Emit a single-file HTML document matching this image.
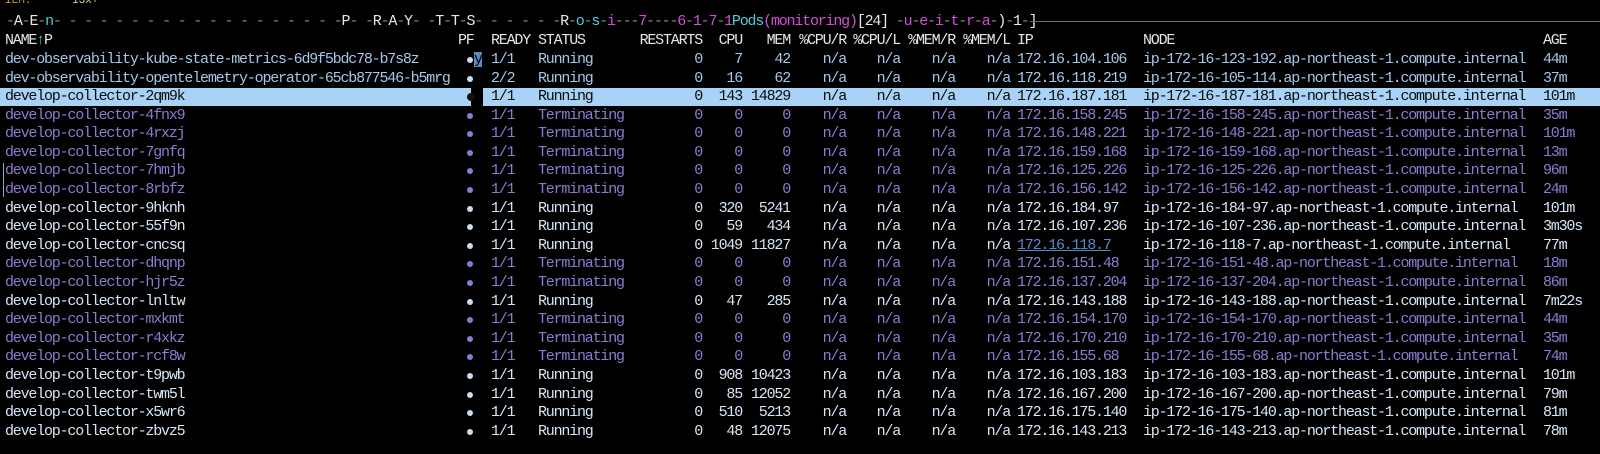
<!DOCTYPE html>
<html><head><meta charset="utf-8"><style>
html,body{margin:0;padding:0;background:#000;width:1600px;height:454px;overflow:hidden}
body{position:relative;font-family:"Liberation Mono",monospace;font-size:15px;letter-spacing:-1.2px;color:#d6e5f5}
.r{position:absolute;left:0;width:1600px;height:19px;line-height:19px;white-space:pre}
.r span{position:absolute;top:0}
.n{left:5px}.rd{left:491px}.st{left:538px}
.rs{right:898px}.cpu{right:858px}.mem{right:810px}.c1{right:754px}.c2{right:700px}.m1{right:645px}.m2{right:590px}
.ip{left:1017px}.nd{left:1143px}.ag{left:1543px}
.dot{left:467px;top:7px!important;width:6px;height:6px;border-radius:50%;background:#c9dcf2}
.t{color:#8c7bd0}.t .dot{background:#8c7bd0}
.b{color:#a7c6e8}
.h{color:#e6e6e6}
.sel{color:#0a0a0a}
.sel .dot{background:#111;width:8px;height:8px;top:6px!important}
.g{color:#8a8a8a}.w{color:#e8e8e8}.cy{color:#4fd0d8}.mg{color:#d24fd8}
i{font-style:normal}
</style></head><body>
<div style="position:absolute;left:5px;top:-6px;font-size:11px;letter-spacing:0;color:#c9a24a;line-height:14px">IEM.</div>
<div style="position:absolute;left:72px;top:-6px;font-size:11px;letter-spacing:0;color:#d8d8a0;line-height:14px">13x+</div>
<div class="r" style="top:12px"><span style="left:6px" class="g">-<i class="w">A</i>-<i class="w">E</i>-<i class="cy">n</i>- - - - - - - - - - - - - - - - - - -<i class="w">P</i>- -<i class="w">R</i>-<i class="w">A</i>-<i class="w">Y</i>- -<i class="w">T</i>-<i class="w">T</i>-<i class="w">S</i>- - - - - -<i class="w">R</i>-<i class="cy">o</i>-<i class="cy">s</i>-<i class="mg">i</i>---<i class="mg">7</i>----<i class="mg">6</i>-<i class="mg">1</i>-<i class="mg">7</i>-<i class="mg">1</i><i class="cy">Pods</i><i class="mg">(monitoring)</i><i class="w">[24]</i> -<i class="mg">u</i>-<i class="mg">e</i>-<i class="mg">i</i>-<i class="mg">t</i>-<i class="mg">r</i>-<i class="mg">a</i>-<i class="w">)</i>-<i class="w">1</i>-<i class="w">]</i></span></div>
<div style="position:absolute;left:1030px;top:21px;width:570px;height:1px;background:#6a6a6a"></div>

<div class="r h" style="top:31px"><span class="n">NAME<i style="color:#3cc9b0">↑</i>P</span><span style="left:458px">PF</span><span class="rd">READY</span><span class="st">STATUS</span><span class="rs">RESTARTS</span><span class="cpu">CPU</span><span class="mem">MEM</span><span class="c1">%CPU/R</span><span class="c2">%CPU/L</span><span class="m1">%MEM/R</span><span class="m2">%MEM/L</span><span class="ip">IP</span><span class="nd">NODE</span><span class="ag">AGE</span></div>

<div class="r b" style="top:50px"><span class="n">dev-observability-kube-state-metrics-6d9f5bdc78-b7s8z</span><span class="dot"></span><span style="left:474px;top:2px;width:8px;height:15px;background:#5a8ac0;color:#000;line-height:15px">y</span><span class="rd">1/1</span><span class="st">Running</span><span class="rs">0</span><span class="cpu">7</span><span class="mem">42</span><span class="c1">n/a</span><span class="c2">n/a</span><span class="m1">n/a</span><span class="m2">n/a</span><span class="ip">172.16.104.106</span><span class="nd">ip-172-16-123-192.ap-northeast-1.compute.internal</span><span class="ag">44m</span></div>
<div class="r b" style="top:69px"><span class="n">dev-observability-opentelemetry-operator-65cb877546-b5mrg</span><span class="dot"></span><span class="rd">2/2</span><span class="st">Running</span><span class="rs">0</span><span class="cpu">16</span><span class="mem">62</span><span class="c1">n/a</span><span class="c2">n/a</span><span class="m1">n/a</span><span class="m2">n/a</span><span class="ip">172.16.118.219</span><span class="nd">ip-172-16-105-114.ap-northeast-1.compute.internal</span><span class="ag">37m</span></div>
<div style="position:absolute;left:0;top:88px;width:471px;height:18px;background:#a9d3f6"></div>
<div style="position:absolute;left:483px;top:88px;width:1117px;height:18px;background:#a9d3f6"></div>
<div class="r sel" style="top:87px"><span class="n">develop-collector-2qm9k</span><span class="dot"></span><span class="rd">1/1</span><span class="st">Running</span><span class="rs">0</span><span class="cpu">143</span><span class="mem">14829</span><span class="c1">n/a</span><span class="c2">n/a</span><span class="m1">n/a</span><span class="m2">n/a</span><span class="ip">172.16.187.181</span><span class="nd">ip-172-16-187-181.ap-northeast-1.compute.internal</span><span class="ag">101m</span></div>
<div class="r t" style="top:106px"><span class="n">develop-collector-4fnx9</span><span class="dot"></span><span class="rd">1/1</span><span class="st">Terminating</span><span class="rs">0</span><span class="cpu">0</span><span class="mem">0</span><span class="c1">n/a</span><span class="c2">n/a</span><span class="m1">n/a</span><span class="m2">n/a</span><span class="ip">172.16.158.245</span><span class="nd">ip-172-16-158-245.ap-northeast-1.compute.internal</span><span class="ag">35m</span></div>
<div class="r t" style="top:124px"><span class="n">develop-collector-4rxzj</span><span class="dot"></span><span class="rd">1/1</span><span class="st">Terminating</span><span class="rs">0</span><span class="cpu">0</span><span class="mem">0</span><span class="c1">n/a</span><span class="c2">n/a</span><span class="m1">n/a</span><span class="m2">n/a</span><span class="ip">172.16.148.221</span><span class="nd">ip-172-16-148-221.ap-northeast-1.compute.internal</span><span class="ag">101m</span></div>
<div class="r t" style="top:143px"><span class="n">develop-collector-7gnfq</span><span class="dot"></span><span class="rd">1/1</span><span class="st">Terminating</span><span class="rs">0</span><span class="cpu">0</span><span class="mem">0</span><span class="c1">n/a</span><span class="c2">n/a</span><span class="m1">n/a</span><span class="m2">n/a</span><span class="ip">172.16.159.168</span><span class="nd">ip-172-16-159-168.ap-northeast-1.compute.internal</span><span class="ag">13m</span></div>
<div style="position:absolute;left:3px;top:163px;width:1px;height:34px;background:#8aa8c8"></div>
<div class="r t" style="top:161px"><span class="n">develop-collector-7hmjb</span><span class="dot"></span><span class="rd">1/1</span><span class="st">Terminating</span><span class="rs">0</span><span class="cpu">0</span><span class="mem">0</span><span class="c1">n/a</span><span class="c2">n/a</span><span class="m1">n/a</span><span class="m2">n/a</span><span class="ip">172.16.125.226</span><span class="nd">ip-172-16-125-226.ap-northeast-1.compute.internal</span><span class="ag">96m</span></div>
<div class="r t" style="top:180px"><span class="n">develop-collector-8rbfz</span><span class="dot"></span><span class="rd">1/1</span><span class="st">Terminating</span><span class="rs">0</span><span class="cpu">0</span><span class="mem">0</span><span class="c1">n/a</span><span class="c2">n/a</span><span class="m1">n/a</span><span class="m2">n/a</span><span class="ip">172.16.156.142</span><span class="nd">ip-172-16-156-142.ap-northeast-1.compute.internal</span><span class="ag">24m</span></div>
<div class="r" style="top:199px"><span class="n">develop-collector-9hknh</span><span class="dot"></span><span class="rd">1/1</span><span class="st">Running</span><span class="rs">0</span><span class="cpu">320</span><span class="mem">5241</span><span class="c1">n/a</span><span class="c2">n/a</span><span class="m1">n/a</span><span class="m2">n/a</span><span class="ip">172.16.184.97</span><span class="nd">ip-172-16-184-97.ap-northeast-1.compute.internal</span><span class="ag">101m</span></div>
<div class="r" style="top:217px"><span class="n">develop-collector-55f9n</span><span class="dot"></span><span class="rd">1/1</span><span class="st">Running</span><span class="rs">0</span><span class="cpu">59</span><span class="mem">434</span><span class="c1">n/a</span><span class="c2">n/a</span><span class="m1">n/a</span><span class="m2">n/a</span><span class="ip">172.16.107.236</span><span class="nd">ip-172-16-107-236.ap-northeast-1.compute.internal</span><span class="ag">3m30s</span></div>
<div class="r" style="top:236px"><span class="n">develop-collector-cncsq</span><span class="dot"></span><span class="rd">1/1</span><span class="st">Running</span><span class="rs">0</span><span class="cpu">1049</span><span class="mem">11827</span><span class="c1">n/a</span><span class="c2">n/a</span><span class="m1">n/a</span><span class="m2">n/a</span><span class="ip" style="color:#5f86c8;text-decoration:underline">172.16.118.7</span><span class="nd">ip-172-16-118-7.ap-northeast-1.compute.internal</span><span class="ag">77m</span></div>
<div class="r t" style="top:254px"><span class="n">develop-collector-dhqnp</span><span class="dot"></span><span class="rd">1/1</span><span class="st">Terminating</span><span class="rs">0</span><span class="cpu">0</span><span class="mem">0</span><span class="c1">n/a</span><span class="c2">n/a</span><span class="m1">n/a</span><span class="m2">n/a</span><span class="ip">172.16.151.48</span><span class="nd">ip-172-16-151-48.ap-northeast-1.compute.internal</span><span class="ag">18m</span></div>
<div class="r t" style="top:273px"><span class="n">develop-collector-hjr5z</span><span class="dot"></span><span class="rd">1/1</span><span class="st">Terminating</span><span class="rs">0</span><span class="cpu">0</span><span class="mem">0</span><span class="c1">n/a</span><span class="c2">n/a</span><span class="m1">n/a</span><span class="m2">n/a</span><span class="ip">172.16.137.204</span><span class="nd">ip-172-16-137-204.ap-northeast-1.compute.internal</span><span class="ag">86m</span></div>
<div class="r" style="top:292px"><span class="n">develop-collector-lnltw</span><span class="dot"></span><span class="rd">1/1</span><span class="st">Running</span><span class="rs">0</span><span class="cpu">47</span><span class="mem">285</span><span class="c1">n/a</span><span class="c2">n/a</span><span class="m1">n/a</span><span class="m2">n/a</span><span class="ip">172.16.143.188</span><span class="nd">ip-172-16-143-188.ap-northeast-1.compute.internal</span><span class="ag">7m22s</span></div>
<div class="r t" style="top:310px"><span class="n">develop-collector-mxkmt</span><span class="dot"></span><span class="rd">1/1</span><span class="st">Terminating</span><span class="rs">0</span><span class="cpu">0</span><span class="mem">0</span><span class="c1">n/a</span><span class="c2">n/a</span><span class="m1">n/a</span><span class="m2">n/a</span><span class="ip">172.16.154.170</span><span class="nd">ip-172-16-154-170.ap-northeast-1.compute.internal</span><span class="ag">44m</span></div>
<div class="r t" style="top:329px"><span class="n">develop-collector-r4xkz</span><span class="dot"></span><span class="rd">1/1</span><span class="st">Terminating</span><span class="rs">0</span><span class="cpu">0</span><span class="mem">0</span><span class="c1">n/a</span><span class="c2">n/a</span><span class="m1">n/a</span><span class="m2">n/a</span><span class="ip">172.16.170.210</span><span class="nd">ip-172-16-170-210.ap-northeast-1.compute.internal</span><span class="ag">35m</span></div>
<div class="r t" style="top:347px"><span class="n">develop-collector-rcf8w</span><span class="dot"></span><span class="rd">1/1</span><span class="st">Terminating</span><span class="rs">0</span><span class="cpu">0</span><span class="mem">0</span><span class="c1">n/a</span><span class="c2">n/a</span><span class="m1">n/a</span><span class="m2">n/a</span><span class="ip">172.16.155.68</span><span class="nd">ip-172-16-155-68.ap-northeast-1.compute.internal</span><span class="ag">74m</span></div>
<div class="r" style="top:366px"><span class="n">develop-collector-t9pwb</span><span class="dot"></span><span class="rd">1/1</span><span class="st">Running</span><span class="rs">0</span><span class="cpu">908</span><span class="mem">10423</span><span class="c1">n/a</span><span class="c2">n/a</span><span class="m1">n/a</span><span class="m2">n/a</span><span class="ip">172.16.103.183</span><span class="nd">ip-172-16-103-183.ap-northeast-1.compute.internal</span><span class="ag">101m</span></div>
<div class="r" style="top:385px"><span class="n">develop-collector-twm5l</span><span class="dot"></span><span class="rd">1/1</span><span class="st">Running</span><span class="rs">0</span><span class="cpu">85</span><span class="mem">12052</span><span class="c1">n/a</span><span class="c2">n/a</span><span class="m1">n/a</span><span class="m2">n/a</span><span class="ip">172.16.167.200</span><span class="nd">ip-172-16-167-200.ap-northeast-1.compute.internal</span><span class="ag">79m</span></div>
<div class="r" style="top:403px"><span class="n">develop-collector-x5wr6</span><span class="dot"></span><span class="rd">1/1</span><span class="st">Running</span><span class="rs">0</span><span class="cpu">510</span><span class="mem">5213</span><span class="c1">n/a</span><span class="c2">n/a</span><span class="m1">n/a</span><span class="m2">n/a</span><span class="ip">172.16.175.140</span><span class="nd">ip-172-16-175-140.ap-northeast-1.compute.internal</span><span class="ag">81m</span></div>
<div class="r" style="top:422px"><span class="n">develop-collector-zbvz5</span><span class="dot"></span><span class="rd">1/1</span><span class="st">Running</span><span class="rs">0</span><span class="cpu">48</span><span class="mem">12075</span><span class="c1">n/a</span><span class="c2">n/a</span><span class="m1">n/a</span><span class="m2">n/a</span><span class="ip">172.16.143.213</span><span class="nd">ip-172-16-143-213.ap-northeast-1.compute.internal</span><span class="ag">78m</span></div>
</body></html>
